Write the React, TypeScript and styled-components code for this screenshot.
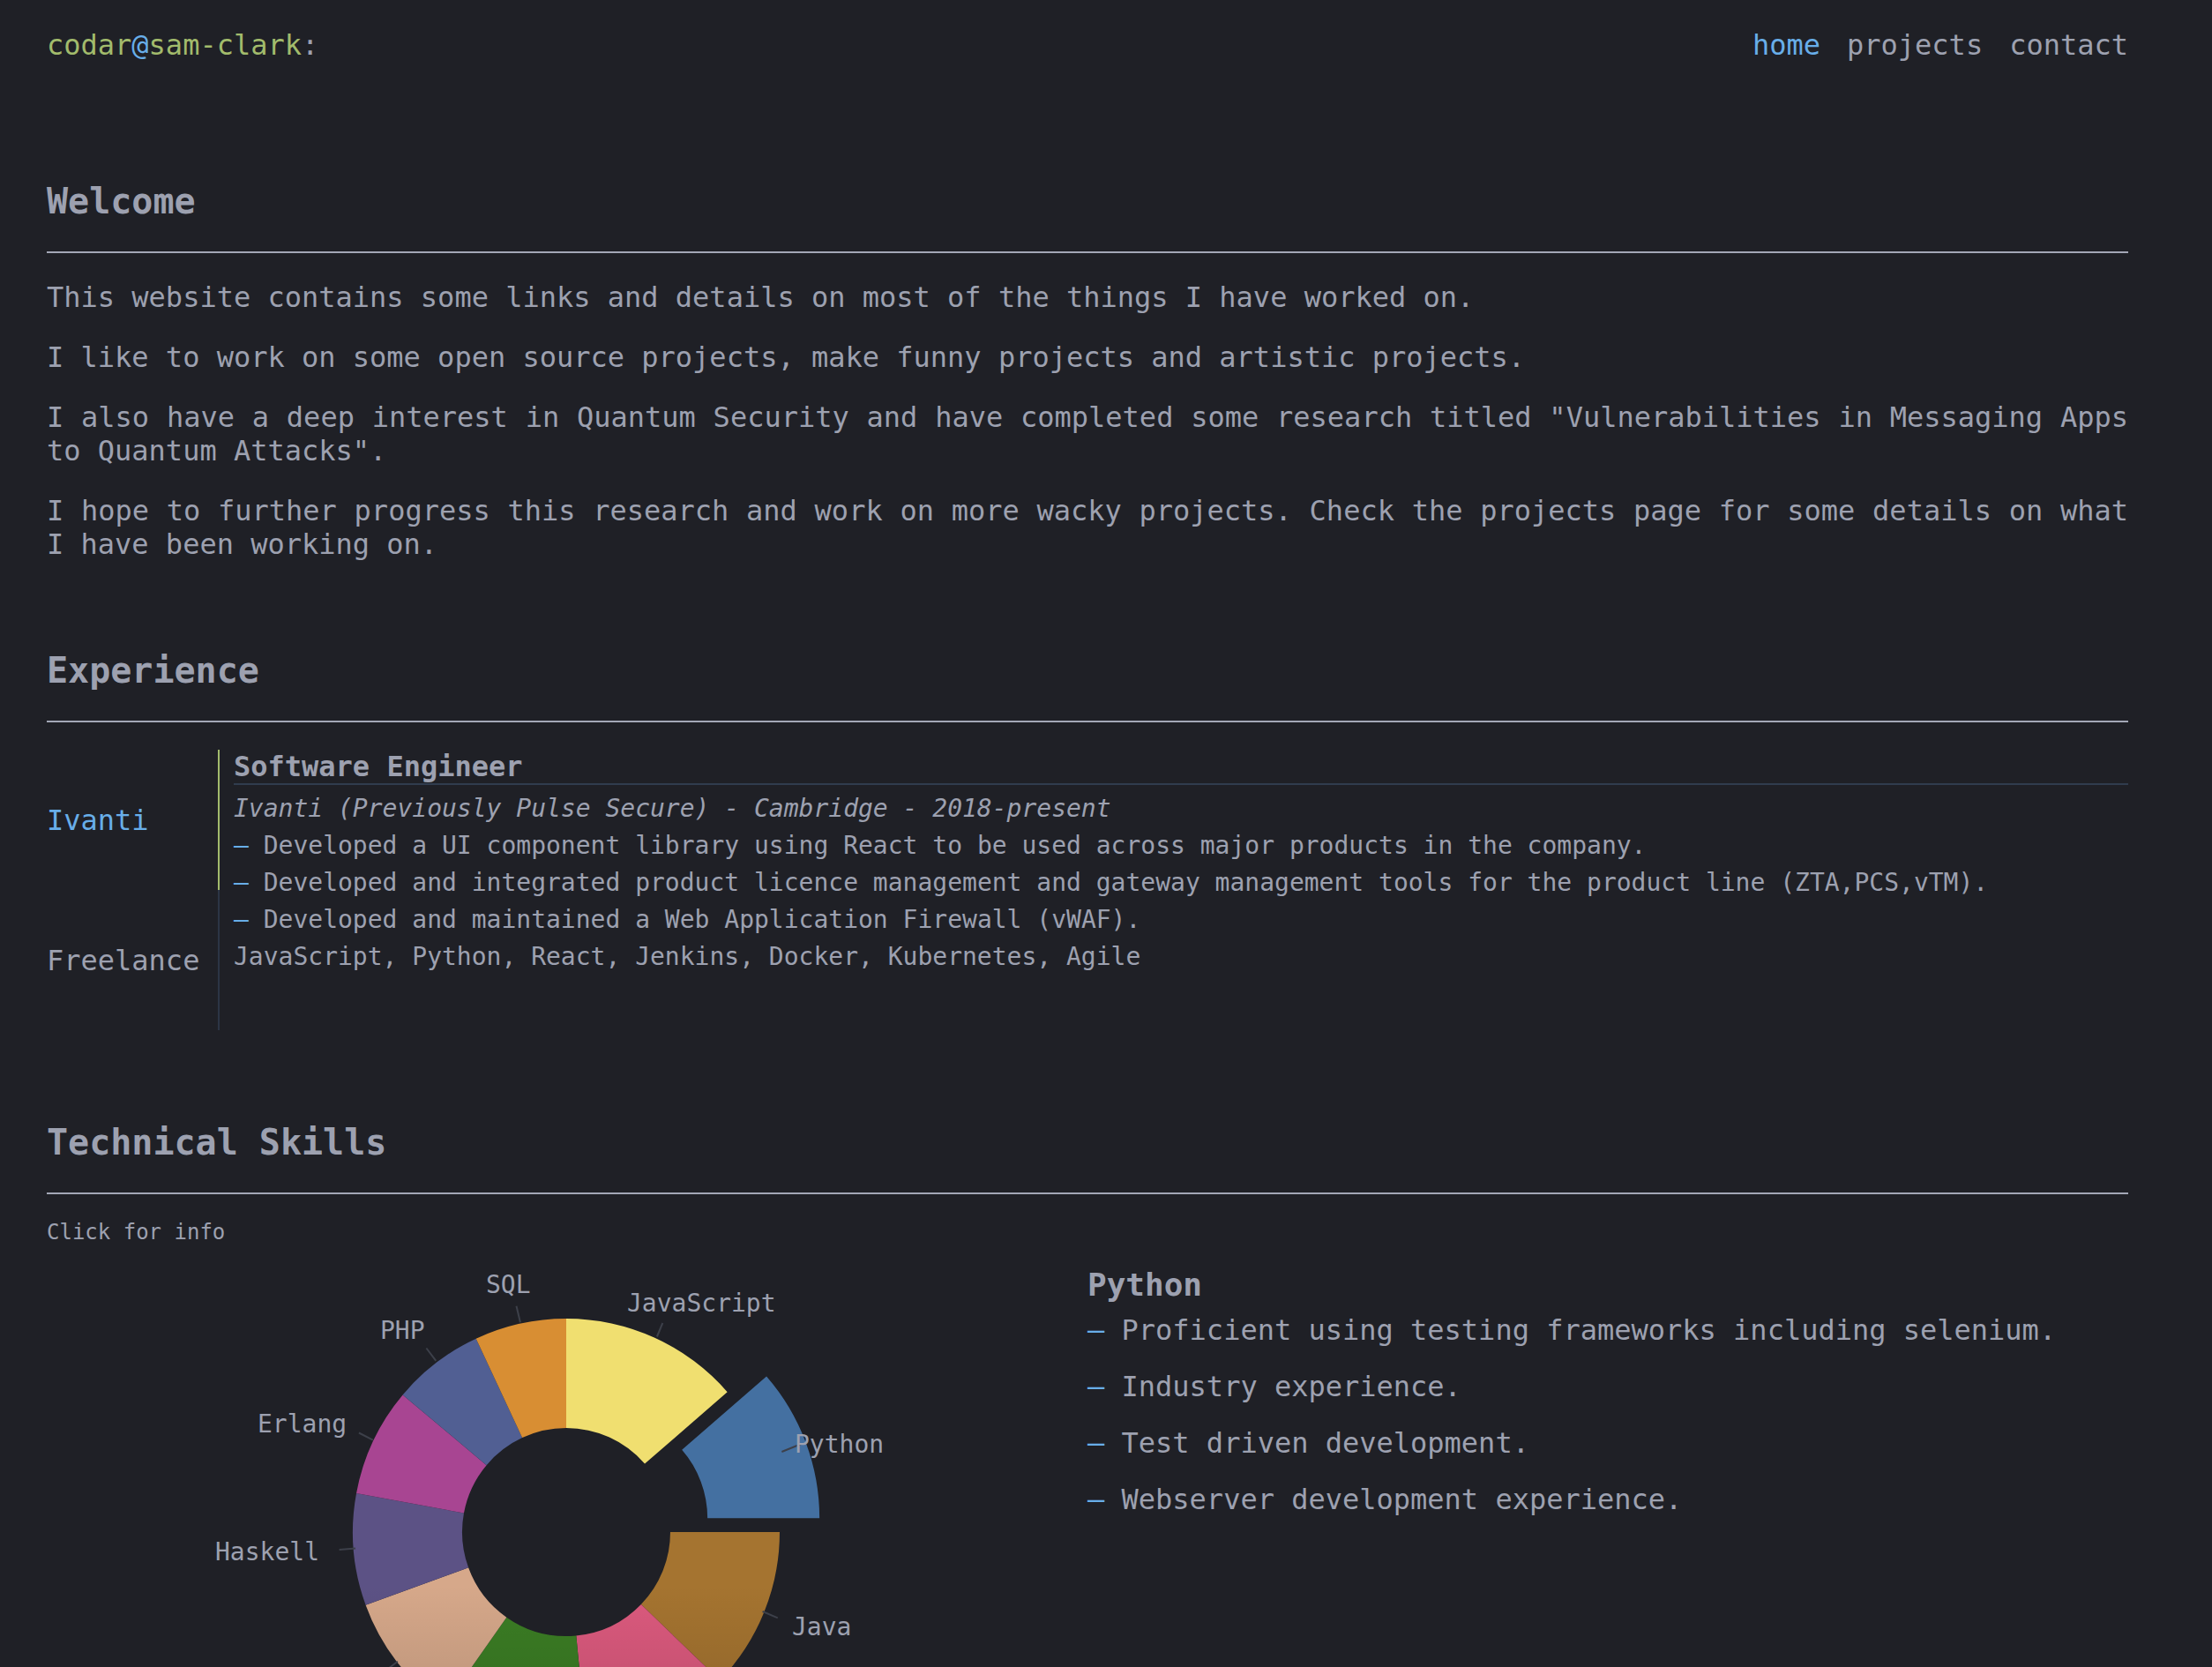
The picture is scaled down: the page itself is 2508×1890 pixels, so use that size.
import React from "react";
import styled, { createGlobalStyle } from "styled-components";

const C = {
  bg: "#1f2026",
  text: "#9da1b0",
  blue: "#68aee9",
  green: "#a2bb6c",
  rule: "#a3a7b6",
  sub: "#303c4e",
  dim: "#2c3545",
  leader: "#3d404a",
};

const Global = createGlobalStyle`
  html, body { margin: 0; background: ${C.bg}; }
  body {
    font-family: "DejaVu Sans Mono", monospace;
    color: ${C.text};
  }
`;

const Page = styled.div`
  padding: 32px 95px 120px 53px;
`;

const Header = styled.header`
  display: flex;
  justify-content: space-between;
  align-items: center;
  font-size: 32px;
  line-height: 38px;
`;

const Prompt = styled.div``;

const Tint = styled.span<{ $c: string }>`
  color: ${(p) => p.$c};
`;

const Nav = styled.nav`
  display: flex;
  gap: 30px;
`;

const NavLink = styled.a<{ $active?: boolean }>`
  color: ${(p) => (p.$active ? C.blue : C.text)};
  text-decoration: none;
`;

const Section = styled.section<{ $top: number }>`
  margin-top: ${(p) => p.$top}px;
`;

const SectionTitle = styled.h2`
  margin: 0;
  font-size: 40px;
  line-height: 48px;
  font-weight: 700;
`;

const Rule = styled.hr`
  margin: 33px 0 31px;
  border: 0;
  border-top: 2px solid ${C.rule};
  height: 0;
`;

const Paragraph = styled.p`
  margin: 0 0 30px;
  font-size: 32px;
  line-height: 38px;
  text-align: justify;
  &:last-child {
    margin-bottom: 0;
  }
`;

const Tabs = styled.div`
  display: flex;
  align-items: flex-start;
`;

const TabList = styled.div`
  display: flex;
  flex-direction: column;
  width: 196px;
  flex: none;
`;

const Tab = styled.button<{ $active?: boolean }>`
  box-sizing: border-box;
  width: 196px;
  padding: 61px 0 60px 0;
  margin: 0;
  background: none;
  border: 0;
  border-right: 2px solid ${(p) => (p.$active ? C.green : C.dim)};
  font-family: inherit;
  font-size: 32px;
  line-height: 38px;
  text-align: left;
  color: ${(p) => (p.$active ? C.blue : C.text)};
  cursor: pointer;
`;

const TabPanel = styled.div`
  flex: 1;
  padding-left: 16px;
`;

const JobTitle = styled.div`
  font-size: 32px;
  line-height: 38px;
  font-weight: 700;
  border-bottom: 2px solid ${C.sub};
  margin-bottom: 6px;
`;

const JobLine = styled.div<{ $italic?: boolean }>`
  font-size: 28px;
  line-height: 42px;
  font-style: ${(p) => (p.$italic ? "italic" : "normal")};
`;

const Dash = styled.span`
  color: ${C.blue};
`;

const Hint = styled.div`
  font-size: 24px;
  line-height: 24px;
`;

const SkillsGrid = styled.div`
  display: grid;
  grid-template-columns: 1fr 1fr;
`;

const ChartSvg = styled.svg`
  display: block;
  width: 1180px;
  height: 700px;
  font-family: "DejaVu Sans Mono", monospace;
`;

const Info = styled.div`
  padding-top: 26px;
`;

const InfoTitle = styled.h3`
  margin: 0;
  font-size: 36px;
  line-height: 43px;
  font-weight: 700;
`;

const InfoList = styled.ul`
  list-style: none;
  padding: 0;
  margin: 11px 0 0;
  display: flex;
  flex-direction: column;
  gap: 26px;
`;

const InfoItem = styled.li`
  font-size: 32px;
  line-height: 38px;
`;

type Slice = {
  name: string;
  from: number;
  to: number;
  color: string;
  label?: { x: number; y: number };
  leader?: [number, number, number, number];
  explode?: boolean;
};

const CX = 589;
const CY = 328;
const R = 242;
const RI = 118;

const slices: Slice[] = [
  { name: "JavaScript", from: 0, to: 49, color: "#f0df70", label: { x: 658, y: 77.5 }, leader: [698.3, 91, 691.9, 106.5] },
  { name: "Python", from: 49, to: 90, color: "#4470a1", label: { x: 848, y: 238 }, leader: [833.4, 237, 855.6, 228], explode: true },
  { name: "Java", from: 90, to: 134, color: "#a57430", label: { x: 845, y: 445 }, leader: [811.6, 418, 828.8, 425.3] },
  { name: "", from: 134, to: 174.5, color: "#dc5a7e" },
  { name: "", from: 174.5, to: 215, color: "#3b7d24" },
  { name: "", from: 215, to: 250, color: "#d6a88a" },
  { name: "Haskell", from: 250, to: 280.5, color: "#5c5285", label: { x: 191, y: 360 }, leader: [331.6, 348, 350, 346.5] },
  { name: "Erlang", from: 280.5, to: 310, color: "#a84592", label: { x: 239, y: 214.7 }, leader: [353.9, 215.5, 369.8, 223.6] },
  { name: "PHP", from: 310, to: 335, color: "#515f93", label: { x: 378, y: 108.5 }, leader: [430.4, 119.5, 441.3, 133.8] },
  { name: "SQL", from: 335, to: 360, color: "#d88e33", label: { x: 498, y: 57 }, leader: [532.5, 71.8, 536.9, 90.2] },
];

const rad = (d: number) => (d * Math.PI) / 180;
const pt = (a: number, r: number, cx = CX, cy = CY) => [cx + r * Math.sin(rad(a)), cy - r * Math.cos(rad(a))];

function arcPath(from: number, to: number, ro: number, ri: number, cx = CX, cy = CY) {
  const large = to - from > 180 ? 1 : 0;
  const [x1, y1] = pt(from, ro, cx, cy);
  const [x2, y2] = pt(to, ro, cx, cy);
  const [x3, y3] = pt(to, ri, cx, cy);
  const [x4, y4] = pt(from, ri, cx, cy);
  return `M${x1} ${y1} A${ro} ${ro} 0 ${large} 1 ${x2} ${y2} L${x3} ${y3} A${ri} ${ri} 0 ${large} 0 ${x4} ${y4} Z`;
}

function leaderFor(a: number): [number, number, number, number] {
  const [x1, y1] = pt(a, 241);
  const [x2, y2] = pt(a, 260);
  return [x1, y1, x2, y2];
}

const DonutChart: React.FC = () => {
  const ring = `M${CX - R} ${CY} A${R} ${R} 0 1 1 ${CX + R} ${CY} A${R} ${R} 0 1 1 ${CX - R} ${CY} Z M${CX - RI} ${CY} A${RI} ${RI} 0 1 0 ${CX + RI} ${CY} A${RI} ${RI} 0 1 0 ${CX - RI} ${CY} Z`;
  return (
    <ChartSvg viewBox="0 0 1180 700">
      <defs>
        <linearGradient id="shade" gradientUnits="userSpaceOnUse" x1="0" y1={CY + 60} x2="0" y2={CY + 250}>
          <stop offset="0" stopColor="#000" stopOpacity="0" />
          <stop offset="1" stopColor="#000" stopOpacity="0.16" />
        </linearGradient>
      </defs>
      {slices.map((s) => {
        if (s.explode) {
          const mid = (s.from + s.to) / 2;
          const dx = 45 * Math.sin(rad(mid));
          const dy = -45 * Math.cos(rad(mid));
          return <path key={s.color} d={arcPath(s.from, s.to, 245, RI, CX + dx, CY + dy)} fill={s.color} />;
        }
        return <path key={s.color} d={arcPath(s.from, s.to, R, RI)} fill={s.color} />;
      })}
      <path d={ring} fill="url(#shade)" fillRule="evenodd" />
      {slices.map((s) => {
        const l = s.leader ?? leaderFor((s.from + s.to) / 2);
        return <line key={"l" + s.color} x1={l[0]} y1={l[1]} x2={l[2]} y2={l[3]} stroke={C.leader} strokeWidth={2} />;
      })}
      {slices
        .filter((s) => s.label)
        .map((s) => (
          <text key={"t" + s.color} x={s.label!.x} y={s.label!.y} fontSize={28} fill={C.text}>
            {s.name}
          </text>
        ))}
    </ChartSvg>
  );
};

const pythonPoints = [
  "Proficient using testing frameworks including selenium.",
  "Industry experience.",
  "Test driven development.",
  "Webserver development experience.",
];

const jobPoints = [
  "Developed a UI component library using React to be used across major products in the company.",
  "Developed and integrated product licence management and gateway management tools for the product line (ZTA,PCS,vTM).",
  "Developed and maintained a Web Application Firewall (vWAF).",
];

export default function App() {
  return (
    <>
      <Global />
      <Page>
        <Header>
          <Prompt>
            <Tint $c={C.green}>codar</Tint>
            <Tint $c={C.blue}>@</Tint>
            <Tint $c={C.green}>sam-clark</Tint>
            <Tint $c={C.text}>:</Tint>
          </Prompt>
          <Nav>
            <NavLink $active href="#">home</NavLink>
            <NavLink href="#">projects</NavLink>
            <NavLink href="#">contact</NavLink>
          </Nav>
        </Header>

        <Section $top={134}>
          <SectionTitle>Welcome</SectionTitle>
          <Rule />
          <div>
            <Paragraph>This website contains some links and details on most of the things I have worked on.</Paragraph>
            <Paragraph>I like to work on some open source projects, make funny projects and artistic projects.</Paragraph>
            <Paragraph>
              I also have a deep interest in Quantum Security and have completed some research titled "Vulnerabilities in
              Messaging Apps to Quantum Attacks".
            </Paragraph>
            <Paragraph>
              I hope to further progress this research and work on more wacky projects. Check the projects page for some
              details on what I have been working on.
            </Paragraph>
          </div>
        </Section>

        <Section $top={100}>
          <SectionTitle>Experience</SectionTitle>
          <Rule />
          <Tabs>
            <TabList>
              <Tab $active>Ivanti</Tab>
              <Tab>Freelance</Tab>
            </TabList>
            <TabPanel>
              <JobTitle>Software Engineer</JobTitle>
              <JobLine $italic>Ivanti (Previously Pulse Secure) - Cambridge - 2018-present</JobLine>
              {jobPoints.map((t) => (
                <JobLine key={t}>
                  <Dash>–</Dash> {t}
                </JobLine>
              ))}
              <JobLine>JavaScript, Python, React, Jenkins, Docker, Kubernetes, Agile</JobLine>
            </TabPanel>
          </Tabs>
        </Section>

        <Section $top={103}>
          <SectionTitle>Technical Skills</SectionTitle>
          <Rule />
          <Hint>Click for info</Hint>
          <SkillsGrid>
            <DonutChart />
            <Info>
              <InfoTitle>Python</InfoTitle>
              <InfoList>
                {pythonPoints.map((t) => (
                  <InfoItem key={t}>
                    <Dash>–</Dash> {t}
                  </InfoItem>
                ))}
              </InfoList>
            </Info>
          </SkillsGrid>
        </Section>
      </Page>
    </>
  );
}
